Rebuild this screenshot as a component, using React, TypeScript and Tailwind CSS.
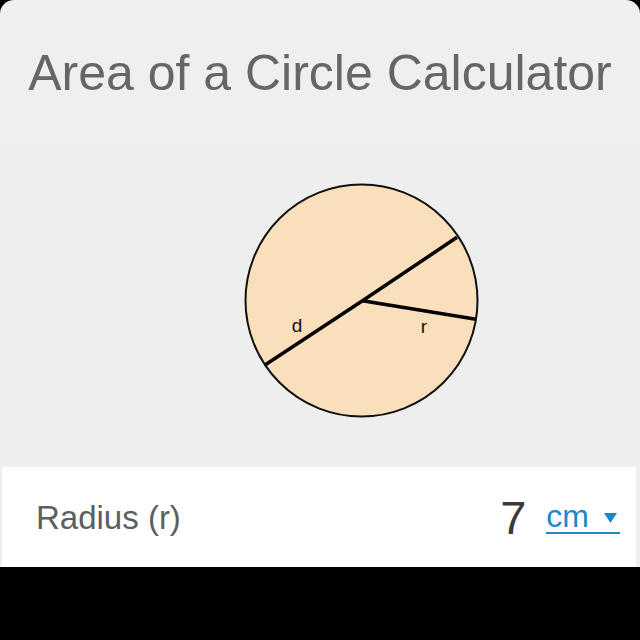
export default function App() {
  return (
    <div
      className="h-[640px] w-[640px] bg-black"
      style={{ fontFamily: '"Liberation Sans", Arial, sans-serif' }}
    >
      <div className="rounded-t-[14px] bg-[#efefef]">
        <header className="flex h-[145px] items-center justify-center">
          <h1 className="text-[50px] leading-none text-[#666666]">
            Area of a Circle Calculator
          </h1>
        </header>

        <div className="h-[322px] bg-[#eeeeee]">
          <svg width="640" height="322" viewBox="0 0 640 322">
            <circle cx="361.5" cy="155.5" r="116" fill="#f9dfbb" stroke="#111" strokeWidth="2" />
            <polyline
              points="265,220 362.5,155.7 457,92.3"
              fill="none"
              stroke="#000"
              strokeWidth="3.5"
            />
            <line x1="362.5" y1="155.7" x2="476" y2="174.3" stroke="#000" strokeWidth="3.5" />
            <text
              x="297"
              y="187"
              fontSize="19"
              textAnchor="middle"
              fill="#111"
              fontFamily="Liberation Sans, Arial, sans-serif"
            >
              d
            </text>
            <text
              x="424"
              y="188"
              fontSize="19"
              textAnchor="middle"
              fill="#111"
              fontFamily="Liberation Sans, Arial, sans-serif"
            >
              r
            </text>
          </svg>
        </div>

        <div className="ml-[2px] mr-[4px] flex h-[100px] items-center justify-between bg-white pl-[34px] pr-[16px]">
          <span className="text-[33px] leading-none text-[#5e5e5e]">Radius (r)</span>
          <div className="flex items-center">
            <span className="text-[47px] leading-none text-[#3a3a3a]">7</span>
            <a className="ml-[20px] flex items-end border-b-2 border-[#1c88c7] pr-[3px] text-[#1c88c7]">
              <span className="text-[32px] leading-none">cm</span>
              <svg width="13" height="10" viewBox="0 0 13 10" className="mb-[9px] ml-[15px]">
                <path d="M0 0 H13 L6.5 10 Z" fill="#1c88c7" />
              </svg>
            </a>
          </div>
        </div>
      </div>
    </div>
  );
}
